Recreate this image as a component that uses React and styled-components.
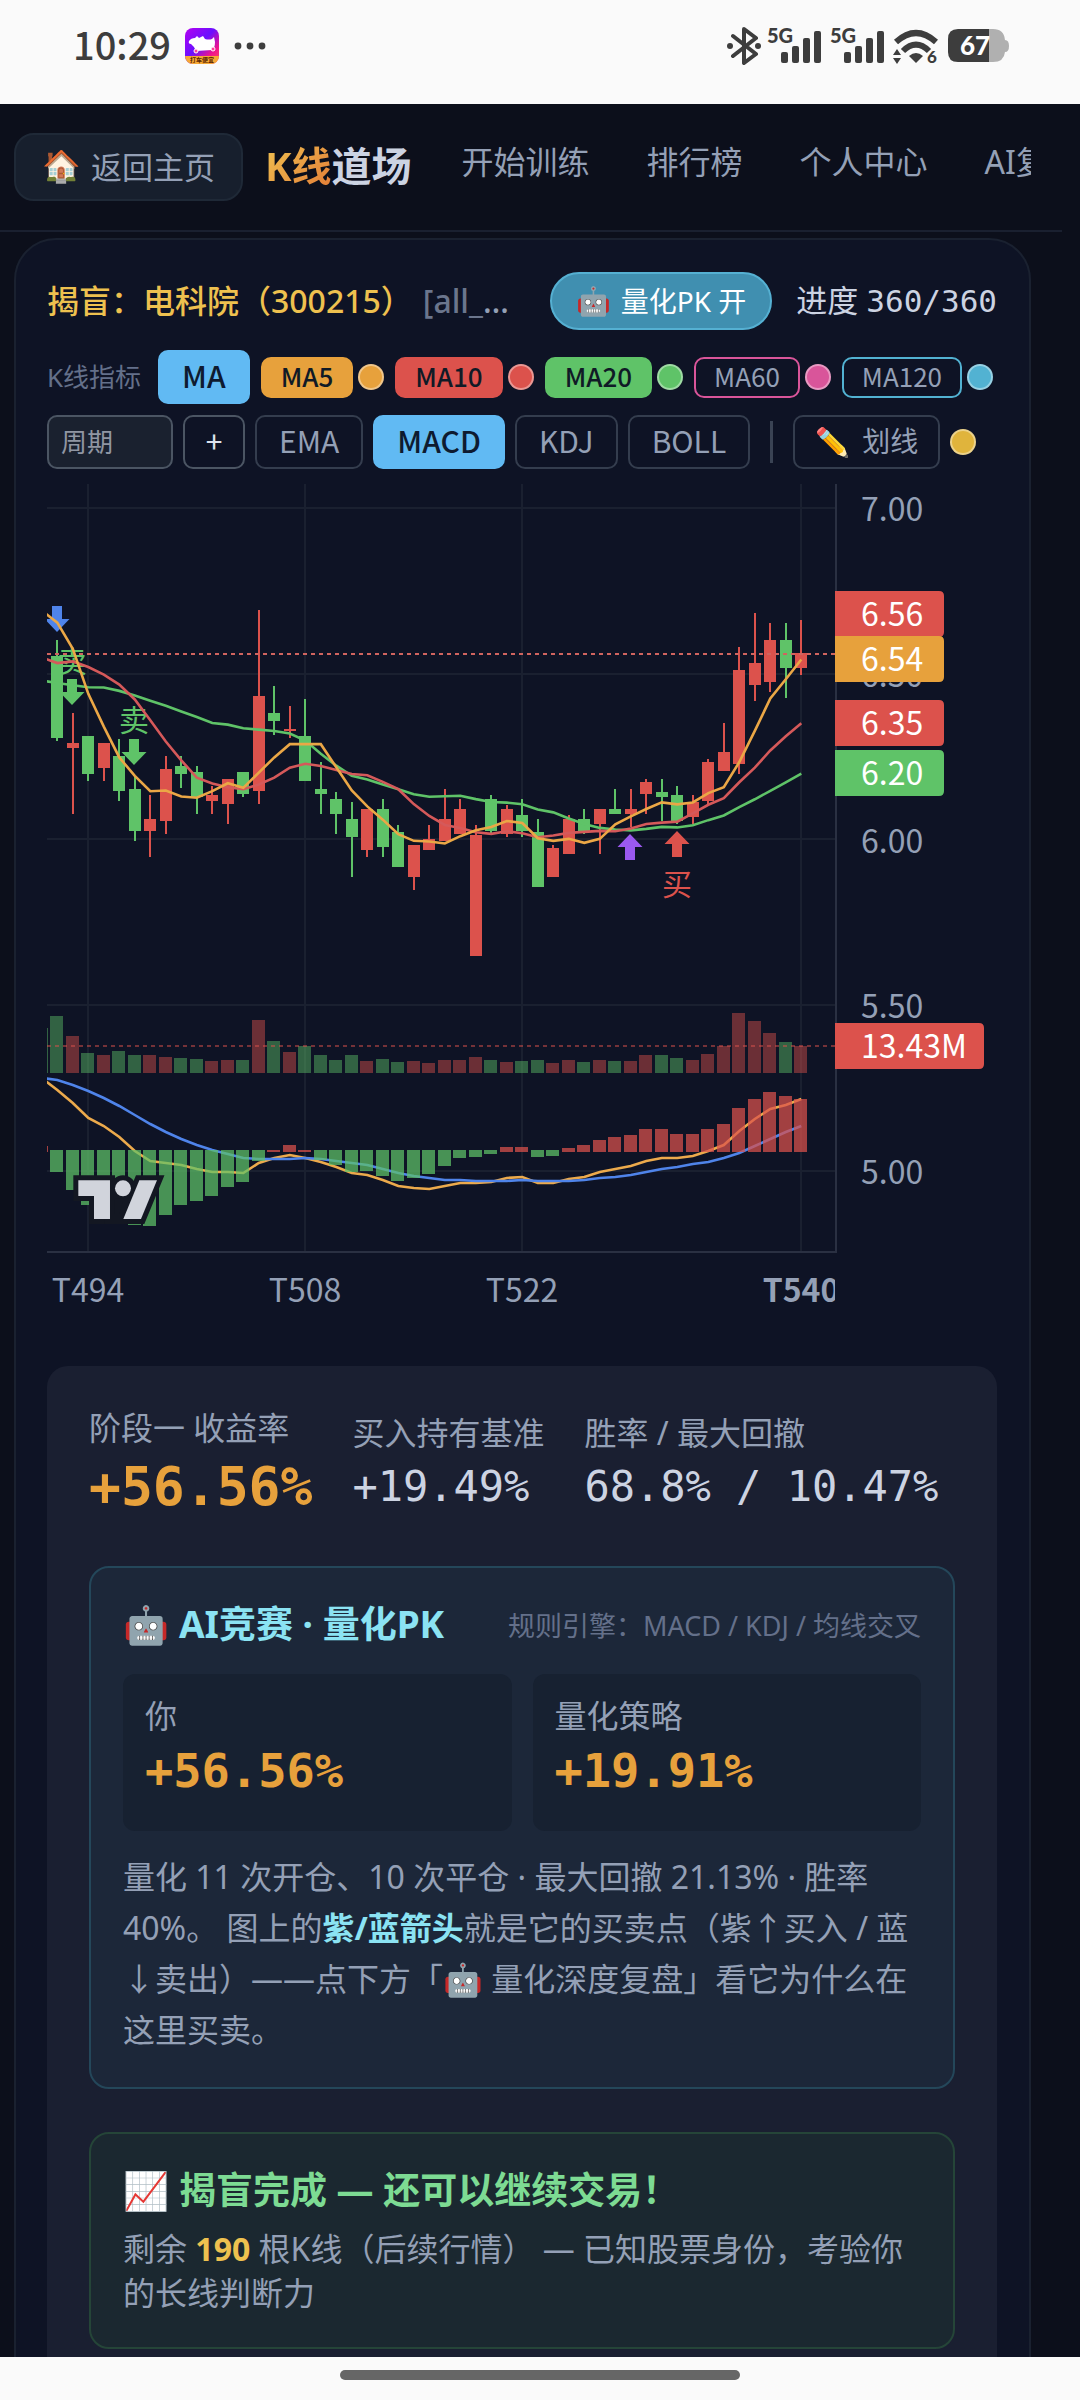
import React from "react";
import styled, { createGlobalStyle } from "styled-components";

const RED = "#dc524c";
const GREEN = "#5fc368";
const ORANGE = "#e7a13c";
const BLUE = "#4f84ea";
const PURPLE = "#9b59f0";
const SANS = '"Noto Sans", "Noto Sans CJK SC", sans-serif';
const UI = '"Noto Sans CJK SC", "Noto Sans", sans-serif';
const MONO = '"DejaVu Sans Mono", "Noto Sans CJK SC", monospace';

const GlobalStyle = createGlobalStyle`
  * { box-sizing: border-box; }
  body { margin: 0; background: #0c0f1b; font-family: ${SANS}; color: #cbd5e1; }
  button, input { font-family: ${UI}; margin: 0; }
  h2, p { margin: 0; }
`;

const Screen = styled.div`
  height: 100vh;
  display: flex;
  flex-direction: column;
  overflow: hidden;
`;

const StatusBar = styled.header`
  flex: none;
  height: 104px;
  padding: 0 71px 12px 73px;
  display: flex;
  align-items: center;
  background: #fafafa;
  color: #3d3d3d;
`;

const Clock = styled.time`
  font-family: ${UI};
  font-size: 38px;
  line-height: 44px;
  padding-bottom: 4px;
  font-weight: 500;
  margin-right: 14px;
`;

const StatusIcons = styled.div`
  margin-left: auto;
  display: flex;
  align-items: center;
  gap: 6px;
`;

const Viewport = styled.div`
  flex: 1;
  min-height: 0;
  overflow: hidden;
`;

const GestureBar = styled.footer`
  flex: none;
  height: 43px;
  display: flex;
  justify-content: center;
  padding-top: 13px;
  background: #fafafa;
`;

const Handle = styled.div`
  width: 37%;
  height: 10px;
  border-radius: 5px;
  background: #666;
`;

const NavBar = styled.nav`
  height: 128px;
  margin-right: 18px;
  padding: 0 31px 0 14px;
  display: flex;
  align-items: center;
  border-bottom: 2px solid #1a2030;
`;

const HomeLink = styled.a`
  flex: none;
  height: 68px;
  padding: 0 26px 4px;
  display: flex;
  align-items: center;
  gap: 10px;
  border: 2px solid #1f2937;
  border-radius: 20px;
  background: #171f2d;
  color: #94a0b6;
  font-size: 31px;
  text-decoration: none;
`;

const Brand = styled.div`
  flex: none;
  margin: 0 50px 0 22px;
  padding-bottom: 2px;
  font-size: 40px;
  line-height: 60px;
  font-weight: 700;
  color: #ccd3e2;
  white-space: nowrap;
`;

const BrandAccent = styled.span`
  background: linear-gradient(135deg, #f0c552, #e27a36);
  background-clip: text;
  color: transparent;
`;

const NavLinks = styled.div`
  min-width: 0;
  flex: 1;
  display: flex;
  gap: 57px;
  overflow: hidden;
  padding-bottom: 10px;
`;

const NavLink = styled.a`
  flex: none;
  font-size: 32px;
  line-height: 48px;
  color: #94a0b6;
  text-decoration: none;
`;

const Card = styled.main`
  margin: 6px 49px 0 14px;
  padding: 32px 32px 32px 31px;
  border: 2px solid #1a2130;
  border-radius: 42px;
  background: #0e1325;
`;

const TitleRow = styled.div`
  display: flex;
  align-items: center;
  height: 57px;
  margin-bottom: 21px;
`;

const StockTitle = styled.h2`
  flex: 1;
  font-size: 32px;
  line-height: 48px;
  font-weight: 500;
  color: #eec14f;
  white-space: nowrap;
`;

const Source = styled.span`
  color: #6b768d;
  margin-left: 10px;
`;

const Ellipsis = styled.span`
  color: #94a0b6;
`;

const PkToggle = styled.button`
  height: 58px;
  padding: 0 24px 2px;
  display: flex;
  align-items: center;
  gap: 10px;
  border: 2px solid #55b0d2;
  border-radius: 29px;
  background: #408fb0;
  color: #fff;
  font-family: ${SANS};
  font-size: 28px;
`;

const Progress = styled.div`
  margin-left: 24px;
  font-size: 31px;
  line-height: 48px;
  color: #ccd3e2;
  white-space: nowrap;
`;

const Mono = styled.span`
  font-family: ${MONO};
`;

const Tools = styled.div`
  display: flex;
  align-items: center;
  gap: ${(p) => (p.$last ? 10 : 11)}px;
  height: 54px;
  margin-bottom: ${(p) => (p.$last ? 15 : 11)}px;
`;

const ToolLabel = styled.span`
  font-size: 26px;
  line-height: 40px;
  color: #64708a;
  margin-right: 6px;
  white-space: nowrap;
`;

const ToolButton = styled.button`
  height: 54px;
  padding: 0 ${(p) => (p.$small ? 20 : 22)}px 4px;
  display: flex;
  align-items: center;
  gap: 12px;
  border: 2px solid ${(p) => (p.$on ? "#61baf3" : "#343d4e")};
  border-radius: 10px;
  background: ${(p) => (p.$on ? "#61baf3" : "transparent")};
  color: ${(p) => (p.$on ? "#0e1b30" : "#94a0b6")};
  font-size: ${(p) => (p.$small ? 28 : 30)}px;
  font-weight: ${(p) => (p.$on ? 500 : 400)};
`;

const MaGroup = styled.div`
  display: flex;
  align-items: center;
  gap: 5px;
`;

const MaButton = styled.button`
  height: 41px;
  padding: 0 18px 2px;
  border: 2px solid ${(p) => p.$color};
  border-radius: 10px;
  background: ${(p) => (p.$on ? p.$color : "transparent")};
  color: ${(p) => (p.$on ? "#101a26" : "#94a0b6")};
  font-size: 26px;
  line-height: 34px;
  font-weight: ${(p) => (p.$on ? 500 : 400)};
`;

const Swatch = styled.button`
  flex: none;
  width: 26px;
  height: 26px;
  padding: 0;
  border: 2px solid rgba(255, 255, 255, 0.4);
  border-radius: 50%;
  background: ${(p) => p.$color};
  background-clip: border-box;
  background-origin: border-box;
`;

const PeriodInput = styled.input`
  width: 126px;
  height: 54px;
  padding: 0 12px 4px;
  border: 2px solid #4b5563;
  border-radius: 10px;
  background: #1a212f;
  color: #cbd5e1;
  font-size: 26px;
  &::placeholder { color: #9096a3; opacity: 1; }
`;

const AddButton = styled(ToolButton)`
  border-color: #4b5563;
  color: #dde3ee;
  width: 62px;
  justify-content: center;
`;

const Divider = styled.span`
  width: 3px;
  height: 42px;
  margin: 0 10px;
  background: #3a4354;
`;

const ChartSvg = styled.svg`
  display: block;
  width: 100%;
  height: auto;
  font-family: ${UI};
  font-size: 32px;
`;

const Results = styled.section`
  margin-top: 42px;
  padding: 42px;
  border-radius: 21px;
  background: #1a1f31;
`;

const Stats = styled.div`
  display: flex;
  align-items: center;
  gap: 40px;
  height: 110px;
  margin-bottom: 48px;
`;

const Stat = styled.div`
  display: flex;
  flex-direction: column;
  gap: 4px;
  white-space: nowrap;
`;

const Label = styled.span`
  font-size: 32px;
  line-height: 44px;
  color: #94a0b6;
`;

const Value = styled.span`
  font-family: ${MONO};
  font-size: ${(p) => p.$size}px;
  line-height: ${(p) => p.$line}px;
  font-weight: ${(p) => (p.$accent ? 700 : 400)};
  color: ${(p) => (p.$accent ? ORANGE : "#ccd3e2")};
`;

const Panel = styled.section`
  padding: 32px;
  border: 2px solid ${(p) => (p.$tone === "green" ? "#254538" : "#24475a")};
  border-radius: 20px;
  background: ${(p) => (p.$tone === "green" ? "#1b2830" : "#1c2739")};
  margin-bottom: 43px;
`;

const PanelHead = styled.div`
  display: flex;
  align-items: center;
  justify-content: space-between;
  height: 48px;
  margin-bottom: 26px;
`;

const PanelTitle = styled.h2`
  display: flex;
  align-items: center;
  gap: 10px;
  margin-bottom: ${(p) => (p.$tone === "green" ? 13 : 0)}px;
  font-size: 37px;
  line-height: 48px;
  font-weight: 700;
  color: ${(p) => (p.$tone === "green" ? "#7ddb93" : "#8be3f3")};
  white-space: nowrap;
`;

const Rule = styled.span`
  font-size: 27px;
  color: #64708a;
  white-space: nowrap;
`;

const Versus = styled.div`
  display: grid;
  grid-template-columns: 1fr 1fr;
  gap: 21px;
  margin-bottom: 20px;
`;

const Side = styled.div`
  height: 157px;
  padding: 20px 22px;
  display: flex;
  flex-direction: column;
  border-radius: 12px;
  background: #172131;
`;

const Copy = styled.p`
  font-size: 32px;
  line-height: ${(p) => p.$line}px;
  color: #94a0b6;
`;

const Cyan = styled.strong`
  font-weight: 700;
  color: #8be3f3;
`;

const Gold = styled.strong`
  font-weight: 700;
  color: #eec14f;
`;

/* Candles in cents: up/down, high, body top, body bottom, low */
const candles = [
  ["d", 660, 655, 631, 630], ["u", 638, 629, 628, 608], ["d", 631, 631, 620, 618], ["u", 629, 629, 622, 618],
  ["d", 630, 625, 615, 612], ["d", 619, 615, 603, 600], ["u", 613, 606, 603, 595], ["u", 625, 621, 606, 602],
  ["d", 625, 622, 620, 616], ["d", 622, 620, 613, 608], ["u", 616, 613, 612, 608], ["u", 618, 618, 611, 605],
  ["d", 620, 620, 614, 613], ["u", 669, 643, 615, 611], ["d", 646, 638, 636, 632], ["u", 640, 633, 633, 631],
  ["d", 642, 631, 618, 618], ["d", 623, 615, 614, 608], ["d", 614, 612, 608, 602], ["d", 611, 606, 601, 589],
  ["u", 609, 609, 597, 595], ["d", 612, 609, 598, 595], ["d", 604, 602, 592, 592], ["u", 598, 598, 589, 585],
  ["u", 604, 600, 597, 597], ["u", 615, 606, 600, 600], ["u", 612, 609, 602, 602], ["u", 604, 601, 565, 565],
  ["d", 613, 612, 603, 602], ["u", 610, 609, 602, 601], ["d", 612, 607, 603, 601], ["d", 606, 602, 586, 586],
  ["u", 598, 597, 589, 589], ["u", 607, 606, 596, 596], ["d", 609, 606, 603, 602], ["u", 609, 609, 605, 596],
  ["d", 615, 609, 608, 608], ["u", 615, 609, 608, 604], ["u", 618, 617, 614, 608], ["d", 618, 614, 613, 606],
  ["d", 616, 613, 606, 605], ["u", 613, 611, 607, 605], ["u", 624, 623, 612, 611], ["u", 635, 626, 621, 621],
  ["u", 658, 651, 623, 620], ["u", 668, 653, 647, 642], ["u", 665, 660, 648, 645], ["d", 665, 660, 652, 643],
  ["u", 666, 656, 652, 650],
];

const volumes = [57, 37, 20, 18, 22, 18, 18, 16, 15, 14, 12, 13, 13, 53, 32, 21, 27, 18, 13, 18, 12, 14, 11, 12, 10, 13, 13, 16, 13, 11, 12, 13, 10, 13, 11, 13, 12, 12, 18, 18, 15, 13, 19, 27, 60, 52, 40, 31, 27];

const histogram = [-22, -40, -55, -65, -72, -75, -76, -65, -55, -51, -46, -37, -32, -11, 2, 7, 2, -10, -15, -22, -21, -26, -31, -28, -24, -16, -8, -7, -4, 5, 5, -7, -6, 4, 7, 12, 15, 17, 23, 23, 18, 18, 23, 28, 44, 53, 60, 56, 53];

const dif = [1078, 1090, 1103, 1118, 1126, 1137, 1151, 1161, 1163, 1165, 1169, 1172, 1172, 1173, 1163, 1158, 1155, 1158, 1162, 1167, 1173, 1175, 1180, 1186, 1188, 1189, 1186, 1183, 1183, 1182, 1178, 1177, 1183, 1183, 1179, 1177, 1172, 1169, 1166, 1161, 1158, 1158, 1156, 1151, 1145, 1131, 1119, 1109, 1105, 1099];

const dea = [1078, 1080, 1085, 1091, 1098, 1106, 1115, 1124, 1132, 1139, 1145, 1150, 1154, 1158, 1159, 1159, 1159, 1158, 1159, 1161, 1163, 1165, 1169, 1173, 1176, 1178, 1180, 1180, 1181, 1181, 1181, 1180, 1181, 1181, 1181, 1180, 1178, 1177, 1175, 1172, 1169, 1167, 1164, 1162, 1158, 1153, 1146, 1139, 1132, 1126];

/* Averages that reach back before the first visible candle, from index -1 on */
const leads = {
  5: [669.2, 665.5, 657.6, 644, 634.1],
  10: [655, 653.3, 653.8, 652.1, 649.8, 646.8, 642.3, 636, 629.6, 623.9],
  20: [648, 647.3, 646.6, 646, 645.9, 644.9, 643.5, 641.9, 640.4, 638.7, 637, 635.2, 634.7, 633.6, 633.2, 632.8, 632, 629.9, 625.9, 622.3],
};

const xAt = (i) => 57.3 + i * 15.5;
const yAt = (cents) => 508.5 + (700 - cents) * 3.31;
const closes = candles.map(([dir, , top, bottom]) => (dir === "u" ? top : bottom));
const polyline = (ys) => ys.map((y, i) => `${xAt(i - 1)},${y}`).join(" ");

function average(n) {
  const values = [...leads[n]];
  for (let i = n - 1; i < closes.length; i += 1) {
    const part = closes.slice(i - n + 1, i + 1);
    values.push(part.reduce((a, b) => a + b, 0) / n);
  }
  return polyline(values.map(yAt));
}

const Arrow = ({ x, y, color, down }) => (
  <path
    fill={color}
    transform={`translate(${x} ${y})${down ? "" : " scale(1 -1)"}`}
    d="M-5 0H5V13H12.5L0 26L-12.5 13H-5Z"
  />
);

const PriceTag = ({ y, color, text, width = 109 }) => (
  <g>
    <path fill={color} d={`M835 ${y}h${width - 5}q5 0 5 5v36q0 5 -5 5h${5 - width}z`} />
    <text x="861" y={y + 35} fill="#fff">{text}</text>
  </g>
);

function Chart() {
  const axis = { fill: "#94a0b6" };
  return (
    <ChartSvg viewBox="47 484 950 840" role="img" aria-label="K线图">
      <defs>
        <clipPath id="plot"><rect x="47" y="484" width="788" height="840" /></clipPath>
      </defs>
      <g stroke="#1a2030" strokeWidth="2">
        {[508, 674, 839, 1005, 1171].map((y) => <path key={y} d={`M47 ${y}H835`} />)}
        {[88, 305, 522, 801].map((x) => <path key={x} d={`M${x} 484V1251`} />)}
      </g>
      <path d="M836 484V1252M47 1252H837" stroke="#2a3042" strokeWidth="2" fill="none" />
      <g clipPath="url(#plot)">
        <g opacity="0.45">
          <rect x="46" y="1028" width="2" height="45" fill={GREEN} />
          {volumes.map((h, i) => (
            <rect key={i} x={Math.round(xAt(i) - 7)} y={1073 - h} width="13" height={h} fill={candles[i][0] === "u" ? RED : GREEN} />
          ))}
        </g>
        <path d="M47 1046H835" stroke={RED} strokeWidth="2" strokeDasharray="4 4" opacity="0.5" />
        <polyline points={polyline(dif)} fill="none" stroke="#ecaa4c" strokeWidth="2.6" />
        <polyline points={polyline(dea)} fill="none" stroke={BLUE} strokeWidth="2.6" />
        <g opacity="0.72">
          <rect x="46" y="1146" width="2" height="6" fill={RED} />
          {histogram.map((v, i) => (
            <rect key={i} x={Math.round(xAt(i) - 7)} y={v > 0 ? 1152 - v : 1150} width="13" height={Math.abs(v)} fill={v > 0 ? RED : GREEN} />
          ))}
        </g>
        {candles.map(([dir, high, top, bottom, low], i) => {
          const x = Math.round(xAt(i));
          return (
            <g key={i} fill={dir === "u" ? RED : GREEN}>
              <rect x={x - 1} y={Math.round(yAt(high)) - 1} width="2" height={Math.round(yAt(low)) - Math.round(yAt(high)) + 2} />
              <rect x={x - 6} y={Math.round(yAt(top)) - 1} width="12" height={Math.round(yAt(bottom)) - Math.round(yAt(top)) + 2} />
            </g>
          );
        })}
        <path d="M47 654H835" stroke="#d0645f" strokeWidth="2" strokeDasharray="4 4" />
        <Arrow x={57} y={606} color={BLUE} down />
        <Arrow x={72} y={679} color={GREEN} down />
        <Arrow x={134} y={739} color={GREEN} down />
        <Arrow x={630} y={860} color={PURPLE} />
        <Arrow x={677} y={857} color={RED} />
        <g fontSize="30" textAnchor="middle">
          <text x="72" y="672" fill={GREEN}>卖</text>
          <text x="134" y="731" fill={GREEN}>卖</text>
          <text x="677" y="895" fill={RED}>买</text>
        </g>
        <g fill="none" strokeWidth="2.6">
          <polyline points={average(20)} stroke={GREEN} />
          <polyline points={average(10)} stroke="#d5595a" />
          <polyline points={average(5)} stroke="#eba746" />
        </g>
        <g textAnchor="middle" {...axis}>
          <text x="88" y="1302">T494</text>
          <text x="305" y="1302">T508</text>
          <text x="522" y="1302">T522</text>
          <text x="801" y="1302" fontWeight="700">T540</text>
        </g>
      </g>
      <g transform="translate(30 980) scale(0.3333)">
        <g fill="#131722" stroke="#131722" strokeWidth="30">
          <path d="M145 601H240V717H192V648H145Z" />
          <circle cx="279" cy="625" r="24" />
          <path d="M328 601H381L333 717H280Z" />
          <path d="M240 640H300L280 717H240Z" />
        </g>
        <g fill="#d1d4dc">
          <path d="M145 601H240V717H192V648H145Z" />
          <circle cx="279" cy="625" r="24" />
          <path d="M328 601H381L333 717H280Z" />
        </g>
      </g>
      <g {...axis}>
        <text x="861" y="521">7.00</text>
        <text x="861" y="687">6.50</text>
        <text x="861" y="853">6.00</text>
        <text x="861" y="1018">5.50</text>
        <text x="861" y="1184">5.00</text>
      </g>
      <PriceTag y={591} color={RED} text="6.56" />
      <PriceTag y={636} color={ORANGE} text="6.54" />
      <PriceTag y={700} color={RED} text="6.35" />
      <PriceTag y={750} color={GREEN} text="6.20" />
      <PriceTag y={1023} color={RED} text="13.43M" width={149} />
    </ChartSvg>
  );
}

const AppBadge = () => (
  <svg width="34" height="36" viewBox="0 0 34 36" aria-hidden="true">
    <defs>
      <linearGradient id="badge" x1="0" y1="0" x2="1" y2="1">
        <stop offset="0" stopColor="#b400f0" />
        <stop offset="0.45" stopColor="#6a10ff" />
        <stop offset="0.75" stopColor="#f0148c" />
        <stop offset="1" stopColor="#ff4f60" />
      </linearGradient>
      <clipPath id="badge-clip"><rect width="34" height="36" rx="8" /></clipPath>
    </defs>
    <g clipPath="url(#badge-clip)">
      <rect width="34" height="36" fill="url(#badge)" />
      <rect y="28" width="34" height="8" fill="#f7a935" />
      <path fill="#fff" d="M4 13q2 -3 6 -3l2 -2 2 2 4 -2 2 3q4 1 7 0l2 -2 1 5q0 6 -3 8l-16 1q-2 -5 -5 -7q-3 0 -2 -3z" />
      <circle cx="11" cy="23" r="2" fill="#ff3d9a" stroke="#fff" />
      <circle cx="28" cy="21" r="2" fill="#ff3d9a" stroke="#fff" />
      <text x="17" y="34" fontSize="6" fontWeight="700" textAnchor="middle" fill="#5a2400">打车便宜</text>
    </g>
  </svg>
);

const MoreDots = styled.svg`
  margin-left: 15px;
`;

const Signal = () => (
  <svg width="57" height="48" viewBox="0 -5 57 48" fill="#3d3d3d" aria-hidden="true">
    <text x="0" y="16" fontFamily="Lato" fontSize="20" fontWeight="900">5G</text>
    <rect x="14" y="25" width="7" height="11" rx="2" />
    <rect x="25" y="19" width="7" height="17" rx="2" />
    <rect x="36" y="11" width="7" height="25" rx="2" />
    <rect x="47" y="4" width="7" height="32" rx="2" />
  </svg>
);

function StatusRow() {
  return (
    <StatusBar>
      <Clock>10:29</Clock>
      <AppBadge />
      <MoreDots width="32" height="8" viewBox="0 0 32 8" fill="#3d3d3d" aria-hidden="true">
        <circle cx="4" cy="4" r="3.4" /><circle cx="16" cy="4" r="3.4" /><circle cx="28" cy="4" r="3.4" />
      </MoreDots>
      <StatusIcons>
        <svg width="34" height="38" viewBox="0 0 34 38" aria-hidden="true">
          <path d="M6 9L29 27L17 36V2L29 11L6 29" fill="none" stroke="#3d3d3d" strokeWidth="4" strokeLinejoin="round" strokeLinecap="round" />
          <circle cx="3" cy="19" r="3" fill="#3d3d3d" /><circle cx="31" cy="19" r="3" fill="#3d3d3d" />
        </svg>
        <Signal />
        <Signal />
        <svg width="48" height="48" viewBox="0 -5 48 48" aria-hidden="true">
          <g fill="none" stroke="#3d3d3d" strokeWidth="6">
            <path d="M3 15Q23 -3 43 15" /><path d="M10 24Q23 11 36 24" />
          </g>
          <path d="M16 29Q23 23 30 29L23 36Z" fill="#3d3d3d" />
          <path d="M0 28L4 22L8 28ZM0 31H8L4 37Z" fill="#3d3d3d" />
          <text x="34" y="36" fontFamily="Lato" fontSize="17" fontWeight="900" fill="#3d3d3d">6</text>
        </svg>
        <svg width="62" height="38" viewBox="0 0 62 38" aria-hidden="true">
          <path d="M42 2h4q11 0 12 11q4 0 4 6t-4 6q-1 10 -12 10h-4z" fill="#b0b0b0" />
          <path d="M42 2V35H11Q1 35 1 25V12Q1 2 11 2Z" fill="#3d3d3d" />
          <text x="28" y="28" fontFamily="Lato" fontSize="26" fontWeight="900" textAnchor="middle" fill="#fff">67</text>
        </svg>
      </StatusIcons>
    </StatusBar>
  );
}

const averages = [
  { name: "MA5", color: ORANGE, on: true },
  { name: "MA10", color: RED, on: true },
  { name: "MA20", color: GREEN, on: true },
  { name: "MA60", color: "#d9559a", on: false },
  { name: "MA120", color: "#52b2d2", on: false },
];

export default function App() {
  return (
    <Screen lang="zh-CN">
      <GlobalStyle />
      <StatusRow />
      <Viewport>
        <NavBar>
          <HomeLink href="#home"><span>🏠</span><span>返回主页</span></HomeLink>
          <Brand><BrandAccent>K线</BrandAccent>道场</Brand>
          <NavLinks>
            {["开始训练", "排行榜", "个人中心", "AI复盘"].map((t) => <NavLink key={t} href="#nav">{t}</NavLink>)}
          </NavLinks>
        </NavBar>
        <Card>
          <TitleRow>
            <StockTitle>
              揭盲：电科院（300215）<Source>[all_</Source><Ellipsis>…</Ellipsis>
            </StockTitle>
            <PkToggle type="button"><span>🤖</span><span>量化PK 开</span></PkToggle>
            <Progress>进度 <Mono>360/360</Mono></Progress>
          </TitleRow>
          <Tools>
            <ToolLabel>K线指标</ToolLabel>
            <ToolButton type="button" $on>MA</ToolButton>
            {averages.map((m) => (
              <MaGroup key={m.name}>
                <MaButton type="button" $color={m.color} $on={m.on}>{m.name}</MaButton>
                <Swatch type="button" aria-label={`${m.name} 颜色`} $color={m.color} />
              </MaGroup>
            ))}
          </Tools>
          <Tools $last>
            <PeriodInput placeholder="周期" aria-label="周期" />
            <AddButton type="button">+</AddButton>
            <ToolButton type="button">EMA</ToolButton>
            <ToolButton type="button" $on>MACD</ToolButton>
            <ToolButton type="button">KDJ</ToolButton>
            <ToolButton type="button">BOLL</ToolButton>
            <Divider />
            <ToolButton type="button" $small><span>✏️</span><span>划线</span></ToolButton>
            <Swatch type="button" aria-label="划线颜色" $color="#e0b43c" />
          </Tools>
          <Chart />
          <Results>
            <Stats>
              <Stat><Label>阶段一 收益率</Label><Value $accent $size={53} $line={66}>+56.56%</Value></Stat>
              <Stat><Label>买入持有基准</Label><Value $size={42} $line={56}>+19.49%</Value></Stat>
              <Stat><Label>胜率 / 最大回撤</Label><Value $size={42} $line={56}>68.8% / 10.47%</Value></Stat>
            </Stats>
            <Panel>
              <PanelHead>
                <PanelTitle><span>🤖</span><span>AI竞赛 · 量化PK</span></PanelTitle>
                <Rule>规则引擎：MACD / KDJ / 均线交叉</Rule>
              </PanelHead>
              <Versus>
                <Side><Label>你</Label><Value $accent $size={47} $line={66}>+56.56%</Value></Side>
                <Side><Label>量化策略</Label><Value $accent $size={47} $line={66}>+19.91%</Value></Side>
              </Versus>
              <Copy $line={51}>
                量化 11 次开仓、10 次平仓 · 最大回撤 21.13% · 胜率 40%。 图上的<Cyan>紫/蓝箭头</Cyan>就是它的买卖点（紫↑买入 / 蓝↓卖出）——点下方「🤖 量化深度复盘」看它为什么在这里买卖。
              </Copy>
            </Panel>
            <Panel $tone="green">
              <PanelTitle $tone="green"><span>📈</span><span>揭盲完成 — 还可以继续交易！</span></PanelTitle>
              <Copy $line={44}>
                剩余 <Gold>190</Gold> 根K线（后续行情） — 已知股票身份，考验你的长线判断力
              </Copy>
            </Panel>
          </Results>
        </Card>
      </Viewport>
      <GestureBar><Handle /></GestureBar>
    </Screen>
  );
}
